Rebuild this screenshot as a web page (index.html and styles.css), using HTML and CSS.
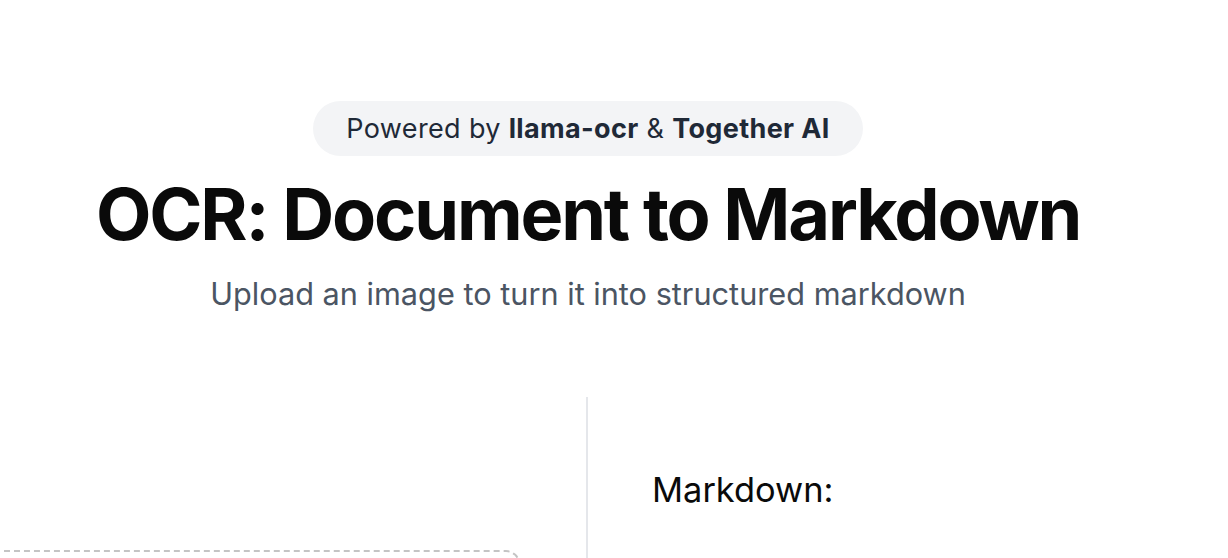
FILE: index.html
```html
<!DOCTYPE html>
<html lang="en">
<head>
<meta charset="utf-8">
<title>OCR: Document to Markdown</title>
<link rel="stylesheet" href="styles.css">
</head>
<body>
<main class="page">
  <section class="hero">
    <div class="badge">Powered by <strong>llama-ocr</strong> &amp; <strong>Together AI</strong></div>
    <h1 class="title">OCR: Document to Markdown</h1>
    <p class="subtitle">Upload an image to turn it into structured markdown</p>
  </section>
  <section class="workspace">
    <div class="upload-col">
      <div class="dropzone"></div>
    </div>
    <div class="result-col">
      <h2 class="result-title">Markdown:</h2>
    </div>
  </section>
</main>
</body>
</html>
```

FILE: styles.css
```css
html, body {
  margin: 0;
  padding: 0;
  background: #ffffff;
}

body {
  font-family: Inter, "Noto Sans", "Liberation Sans", sans-serif;
  color: #0a0a0a;
  overflow: hidden;
  height: 558px;
}

.page {
  width: 1176px;
}

.hero {
  display: flex;
  flex-direction: column;
  align-items: center;
  padding-top: 101px;
}

.badge {
  background: #f3f4f6;
  color: #1f2937;
  border-radius: 9999px;
  font-size: 27px;
  letter-spacing: 0.35px;
  line-height: 33px;
  padding: 11px 33px;
  white-space: nowrap;
}

.badge strong {
  font-weight: 700;
}

.title {
  margin: 22px 0 0;
  font-size: 72px;
  line-height: 1;
  font-weight: 700;
  letter-spacing: -0.03em;
  color: #0a0a0a;
  white-space: nowrap;
}

.subtitle {
  margin: 26px 0 0;
  font-size: 30.7px;
  line-height: 36px;
  color: #4b5563;
  white-space: nowrap;
}

.workspace {
  display: flex;
  margin-top: 85px;
  height: 200px;
}

.upload-col {
  width: 588px;
  border-right: 2px solid #e5e7eb;
  padding-top: 153px;
  box-sizing: border-box;
  flex: none;
}

.dropzone {
  margin-left: -40px;
  width: 560px;
  height: 200px;
  border: 2px dashed #c4c4c4;
  border-radius: 14px;
  box-sizing: border-box;
}

.result-col {
  padding-left: 64px;
  padding-top: 73px;
}

.result-title {
  margin: 0;
  font-size: 34.4px;
  line-height: 40px;
  font-weight: 400;
  color: #0a0a0a;
  white-space: nowrap;
}
```
